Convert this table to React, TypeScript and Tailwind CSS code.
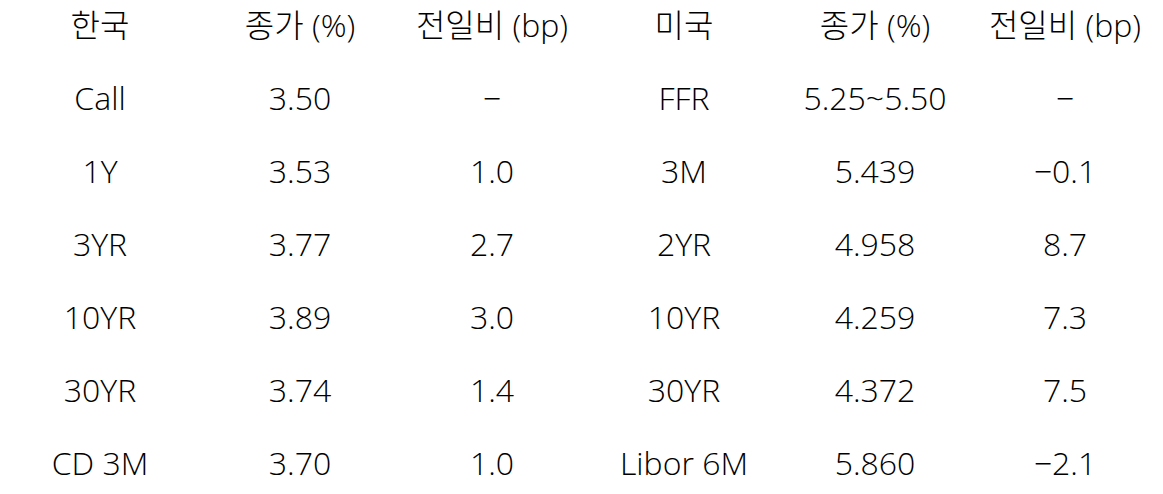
const rows = [
  ['한국', '종가 (%)', '전일비 (bp)', '미국', '종가 (%)', '전일비 (bp)'],
  ['Call', '3.50', '−', 'FFR', '5.25~5.50', '−'],
  ['1Y', '3.53', '1.0', '3M', '5.439', '−0.1'],
  ['3YR', '3.77', '2.7', '2YR', '4.958', '8.7'],
  ['10YR', '3.89', '3.0', '10YR', '4.259', '7.3'],
  ['30YR', '3.74', '1.4', '30YR', '4.372', '7.5'],
  ['CD 3M', '3.70', '1.0', 'Libor 6M', '5.860', '−2.1'],
];

export default function App() {
  return (
    <div
      className="w-[1163px] h-[494px] overflow-hidden bg-white text-black text-[32px] font-light"
      style={{ fontFamily: '"Open Sans", "Noto Sans CJK KR", sans-serif' }}
    >
      {/* rate table, header row sits partly above the crop */}
      <div className="-mt-[12px] grid grid-cols-[200px_200px_184px_200px_182px_198px]">
        {rows.map((row, i) =>
          row.map((cell, j) => (
            <div key={`${i}-${j}`} className="h-[73px] flex items-center justify-center whitespace-nowrap">
              {cell}
            </div>
          ))
        )}
      </div>
    </div>
  );
}
